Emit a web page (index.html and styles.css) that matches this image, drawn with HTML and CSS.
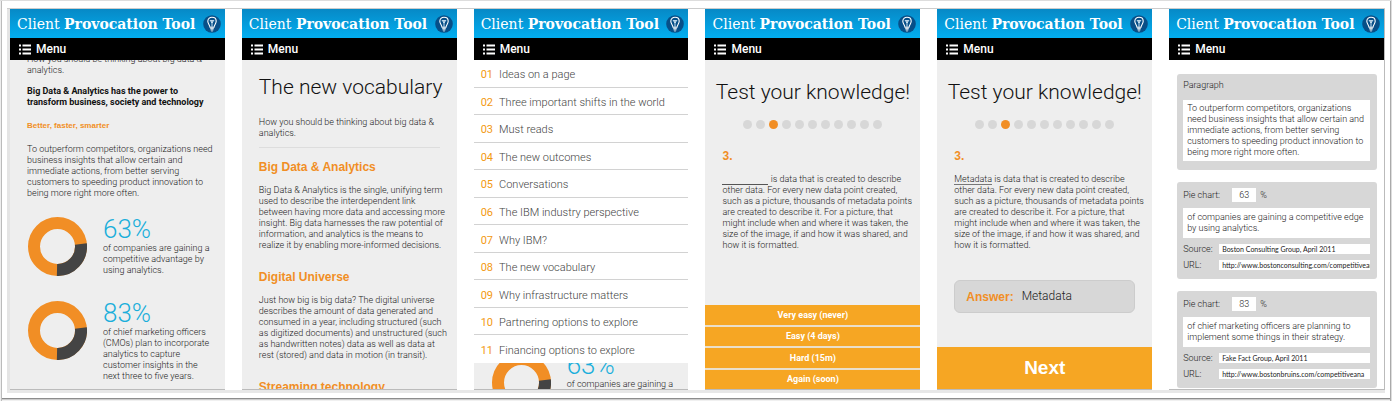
FILE: index.html
```html
<!DOCTYPE html>
<html lang="en">
<head>
<meta charset="utf-8">
<title>Client Provocation Tool</title>
<link rel="stylesheet" href="styles.css">
</head>
<body>
<svg class="defs" aria-hidden="true">
  <symbol id="bulb" viewBox="0 0 18 18">
    <circle cx="9" cy="9" r="8.8" fill="#074f88"/>
    <path d="M7 12.2C6.8 10 4.8 8.6 4.8 6.2C4.8 3.9 6.6 2.3 9 2.3S13.2 3.9 13.2 6.2C13.2 8.6 11.2 10 11 12.2Z" fill="none" stroke="#fff" stroke-width="1.1"/>
    <path d="M6.8 5.6H11.2M9 5.6V12M7.8 6L9 8L10.2 6" fill="none" stroke="#dceefa" stroke-width="0.9"/>
    <path d="M7.2 13.4H10.8M7.5 14.8H10.5M8.3 16H9.7" stroke="#fff" stroke-width="0.9"/>
  </symbol>
  <symbol id="list" viewBox="0 0 12 11">
    <path d="M0 1.5H2M0 5.5H2M0 9.5H2M3.5 1.5H12M3.5 5.5H12M3.5 9.5H12" stroke="#fff" stroke-width="1.8"/>
  </symbol>
  <symbol id="donut" viewBox="0 0 59 59">
    <circle cx="29.5" cy="29.5" r="23.5" fill="none" stroke="#f18e25" stroke-width="12"/>
    <path d="M52.9 27A23.5 23.5 0 0 1 29 53" fill="none" stroke="#444" stroke-width="12"/>
  </symbol>
</svg>
<main class="sheet">
<div class="board">

  <section class="phone">
    <header class="brand"><h2>Client <b>Provocation Tool</b></h2><svg class="bulb"><use href="#bulb"/></svg></header>
    <button class="menu" type="button"><svg><use href="#list"/></svg>Menu</button>
    <div class="content scrolled">
      <p>How you should be thinking about big data &amp;<br>analytics.</p>
      <p class="strong">Big Data &amp; Analytics has the power to<br>transform business, society and technology</p>
      <p class="kicker">Better, faster, smarter</p>
      <p>To outperform competitors, organizations need<br>business insights that allow certain and<br>immediate actions, from better serving<br>customers to speeding product innovation to<br>being more right more often.</p>
      <div class="stat"><svg><use href="#donut"/></svg><div><strong>63%</strong><p>of companies are gaining a<br>competitive advantage by<br>using analytics.</p></div></div>
      <div class="stat"><svg><use href="#donut"/></svg><div><strong>83%</strong><p>of chief marketing officers<br>(CMOs) plan to incorporate<br>analytics to capture<br>customer insights in the<br>next three to five years.</p></div></div>
    </div>
  </section>

  <section class="phone">
    <header class="brand"><h2>Client <b>Provocation Tool</b></h2><svg class="bulb"><use href="#bulb"/></svg></header>
    <button class="menu" type="button"><svg><use href="#list"/></svg>Menu</button>
    <div class="content article">
      <h1>The new vocabulary</h1>
      <p class="lead">How you should be thinking about big data &amp;<br>analytics.</p>
      <h3>Big Data &amp; Analytics</h3>
      <p>Big Data &amp; Analytics is the single, unifying term<br>used to describe the interdependent link<br>between having more data and accessing more<br>insight. Big data harnesses the raw potential of<br>information, and analytics is the means to<br>realize it by enabling more-informed decisions.</p>
      <h3>Digital Universe</h3>
      <p>Just how big is big data? The digital universe<br>describes the amount of data generated and<br>consumed in a year, including structured (such<br>as digitized documents) and unstructured (such<br>as handwritten notes) data as well as data at<br>rest (stored) and data in motion (in transit).</p>
      <h3>Streaming technology</h3>
    </div>
  </section>

  <section class="phone">
    <header class="brand"><h2>Client <b>Provocation Tool</b></h2><svg class="bulb"><use href="#bulb"/></svg></header>
    <button class="menu" type="button"><svg><use href="#list"/></svg>Menu</button>
    <nav class="drawer">
      <a href="#p1"><span>01</span>Ideas on a page</a>
      <a href="#p2"><span>02</span>Three important shifts in the world</a>
      <a href="#p3"><span>03</span>Must reads</a>
      <a href="#p4"><span>04</span>The new outcomes</a>
      <a href="#p5"><span>05</span>Conversations</a>
      <a href="#p6"><span>06</span>The IBM industry perspective</a>
      <a href="#p7"><span>07</span>Why IBM?</a>
      <a href="#p8"><span>08</span>The new vocabulary</a>
      <a href="#p9"><span>09</span>Why infrastructure matters</a>
      <a href="#p10"><span>10</span>Partnering options to explore</a>
      <a href="#p11"><span>11</span>Financing options to explore</a>
    </nav>
    <div class="content under">
      <div class="stat"><svg><use href="#donut"/></svg><div><strong>63%</strong><p>of companies are gaining a</p></div></div>
    </div>
  </section>

  <section class="phone">
    <header class="brand"><h2>Client <b>Provocation Tool</b></h2><svg class="bulb"><use href="#bulb"/></svg></header>
    <button class="menu" type="button"><svg><use href="#list"/></svg>Menu</button>
    <div class="content quiz">
      <h1>Test your knowledge!</h1>
      <div class="dots"><i></i><i></i><i class="on"></i><i></i><i></i><i></i><i></i><i></i><i></i><i></i><i></i></div>
      <h4>3.</h4>
      <p><span class="blank"></span> is data that is created to describe<br>other data. For every new data point created,<br>such as a picture, thousands of metadata points<br>are created to describe it. For a picture, that<br>might include when and where it was taken, the<br>size of the image, if and how it was shared, and<br>how it is formatted.</p>
    </div>
    <div class="grades">
      <button type="button">Very easy (never)</button>
      <button type="button">Easy (4 days)</button>
      <button type="button">Hard (15m)</button>
      <button type="button">Again (soon)</button>
    </div>
  </section>

  <section class="phone">
    <header class="brand"><h2>Client <b>Provocation Tool</b></h2><svg class="bulb"><use href="#bulb"/></svg></header>
    <button class="menu" type="button"><svg><use href="#list"/></svg>Menu</button>
    <div class="content quiz">
      <h1>Test your knowledge!</h1>
      <div class="dots"><i></i><i></i><i class="on"></i><i></i><i></i><i></i><i></i><i></i><i></i><i></i><i></i></div>
      <h4>3.</h4>
      <p><span class="filled">Metadata</span> is data that is created to describe<br>other data. For every new data point created,<br>such as a picture, thousands of metadata points<br>are created to describe it. For a picture, that<br>might include when and where it was taken, the<br>size of the image, if and how it was shared, and<br>how it is formatted.</p>
      <div class="answer"><b>Answer:</b>Metadata</div>
    </div>
    <button class="next" type="button">Next</button>
  </section>

  <section class="phone editor">
    <header class="brand"><h2>Client <b>Provocation Tool</b></h2><svg class="bulb"><use href="#bulb"/></svg></header>
    <button class="menu" type="button"><svg><use href="#list"/></svg>Menu</button>
    <form class="forms">
      <div class="card">
        <label class="title" for="para">Paragraph</label>
        <textarea id="para" class="long" rows="5">To outperform competitors, organizations
need business insights that allow certain and
immediate actions, from better serving
customers to speeding product innovation to
being more right more often.</textarea>
      </div>
      <div class="card">
        <div class="pie"><label for="pie1">Pie chart:</label><input id="pie1" value="63"><span>%</span></div>
        <textarea rows="2" aria-label="Pie chart text">of companies are gaining a competitive edge
by using analytics.</textarea>
        <div class="field"><label for="src1">Source:</label><input id="src1" value="Boston Consulting Group, April 2011"></div>
        <div class="field"><label for="url1">URL:</label><input id="url1" value="http://www.bostonconsulting.com/competitiveana"></div>
      </div>
      <div class="card">
        <div class="pie"><label for="pie2">Pie chart:</label><input id="pie2" value="83"><span>%</span></div>
        <textarea rows="2" aria-label="Pie chart text">of chief marketing officers are planning to
implement some things in their strategy.</textarea>
        <div class="field"><label for="src2">Source:</label><input id="src2" value="Fake Fact Group, April 2011"></div>
        <div class="field"><label for="url2">URL:</label><input id="url2" value="http://www.bostonbruins.com/competitiveana"></div>
      </div>
    </form>
  </section>

</div>
</main>
</body>
</html>
```
FILE: styles.css
```css
* { box-sizing: border-box; }
body { margin: 0; background: #fff; }
h1, h2, h3, h4, p { margin: 0; font-weight: 300; }
button, input, textarea { font: inherit; color: inherit; border: 0; border-radius: 0; margin: 0; padding: 0; outline: 0; }
.defs { position: absolute; width: 0; height: 0; }

.sheet {
  height: 100vh;
  padding: 8px 5px;
  background: #fff;
  box-shadow: inset 0 1px #ddd, inset 1px 0 #eee, inset 2px 0 #bbb, inset -1px 0 #ddd, inset -2px 0 #aaa, inset 0 -1px #f0f0f0, inset 0 -2px #ccc, inset 0 -3px #8c8c8c;
}
.board {
  height: 100%;
  display: grid;
  grid-template-columns: repeat(6, minmax(0, 1fr));
  gap: 17px;
  margin: 0 2px;
  padding: 0 1px 0 3px;
  border-top: 1px solid #ccc;
  border-bottom: 3px solid #e7e7e7;
  box-shadow: inset 3px 0 #e4e4e4, inset -1px 0 #bbb;
}

.phone {
  position: relative;
  display: flex;
  flex-direction: column;
  min-height: 0;
  overflow: hidden;
  background: #eee;
  border-bottom: 1px solid #bbb;
  color: #222;
  font: 300 9px/11px Roboto, "Liberation Sans", sans-serif;
}
.editor { background: #fff; }

.brand {
  position: relative;
  z-index: 2;
  flex: none;
  height: 29px;
  display: flex;
  align-items: center;
  justify-content: space-between;
  padding: 0 4px 0 7px;
  background: linear-gradient(#0789c6, #02aef0);
  color: #fff;
}
.brand h2 { font: 400 14px/20px "DejaVu Serif", serif; white-space: nowrap; }
.bulb { flex: none; width: 18px; height: 18px; }
.menu {
  position: relative;
  z-index: 2;
  flex: none;
  height: 22px;
  display: flex;
  align-items: center;
  gap: 5px;
  padding: 0 9px;
  background: #000;
  color: #fff;
  font: 500 12px/16px Roboto, "Liberation Sans", sans-serif;
}
.menu svg { width: 12px; height: 11px; }

.content { flex: 1; min-height: 0; padding: 0 17px; white-space: nowrap; }
.content h1 { color: #111; font-size: 21px; line-height: 28px; }
.content h3, .content h4 { color: #f18e25; font: 700 12px/16px "Liberation Sans", sans-serif; }

.scrolled { margin-top: -6px; }
.scrolled > p { margin-bottom: 10px; }
.scrolled .strong { color: #111; font-weight: 700; margin-bottom: 12px; }
.scrolled .kicker { color: #f18e25; font: 700 8px/11px "Liberation Sans", sans-serif; margin-bottom: 13px; }

.stat { display: flex; gap: 16px; min-height: 84px; }
.stat svg { flex: none; width: 59px; height: 59px; margin: 8px 0 0 1px; }
.stat strong { display: block; color: #1aaedb; font-size: 26px; line-height: 28px; font-weight: 300; padding-top: 6px; }

.article h1 { padding: 13px 0 16px; }
.lead { padding-bottom: 8px; border-bottom: 1px solid #ddd; }
.article h3 { margin: 18px 0 10px; }
.article .lead + h3 { margin-top: 11px; }

.drawer {
  position: absolute;
  z-index: 1;
  inset: 51px 0 auto;
  height: 303px;
  display: grid;
  grid-auto-rows: 1fr;
  background: #fff;
}
.drawer a {
  display: flex;
  align-items: center;
  gap: 6px;
  padding: 3px 0 0 7px;
  border-bottom: 1px solid #d2d2d2;
  color: #444;
  font-size: 11px;
  text-decoration: none;
  white-space: nowrap;
}
.drawer a:last-child { border: 0; }
.drawer span { color: #f39a12; font-weight: 400; }
.under { padding-top: 285px; }

.quiz h1 { margin: 18px -10px 14px; text-align: center; }
.dots { display: flex; justify-content: center; gap: 4px; }
.dots i { width: 9px; height: 9px; border-radius: 50%; background: #d7d7d7; }
.dots .on { background: #f18e25; }
.quiz h4 { margin: 19px 0 10px; }
.blank { display: inline-block; width: 46px; height: 10px; border-bottom: 1px solid #555; vertical-align: bottom; }
.filled { border-bottom: 1px solid #777; }
.answer { display: flex; align-items: center; gap: 8px; height: 33px; margin-top: 29px; padding: 0 11px; border: 1px solid #ccc; border-radius: 6px; background: #d7d7d7; font-size: 12px; }
.answer b { color: #f18e25; font: 700 12px/16px "Liberation Sans", sans-serif; }

.grades { flex: none; height: 84px; display: grid; grid-auto-rows: 1fr; gap: 2px; background: #eadfca; }
.grades button, .next { background: #f6a623; color: #fff; font: 700 9px/12px Roboto, sans-serif; }
.next { flex: none; height: 42px; font: 700 19px/24px "Liberation Sans", sans-serif; }

.forms { display: grid; gap: 12px; padding: 14px 7px 0 8px; }
.card { padding: 6px 7px 9px 6px; border-radius: 3px; background: #d7d7d7; white-space: nowrap; }
.title { display: block; margin-bottom: 9px; }
.card textarea { display: block; width: 100%; padding: 4px; background: #fff; resize: none; overflow: hidden; white-space: pre; }
.card .long { padding: 3px 4px; }
.pie { display: flex; align-items: center; height: 14px; margin-bottom: 6px; }
.pie label { width: 49px; }
.pie input { width: 24px; height: 14px; text-align: center; background: #fff; }
.pie span { margin-left: 4px; }
.field { display: flex; align-items: center; height: 10px; margin-top: 6px; }
.field label { flex: none; width: 36px; }
.field input { flex: 1; min-width: 0; height: 10px; padding-left: 3px; background: #fff; font: 400 7px/10px Lato, sans-serif; }
```
